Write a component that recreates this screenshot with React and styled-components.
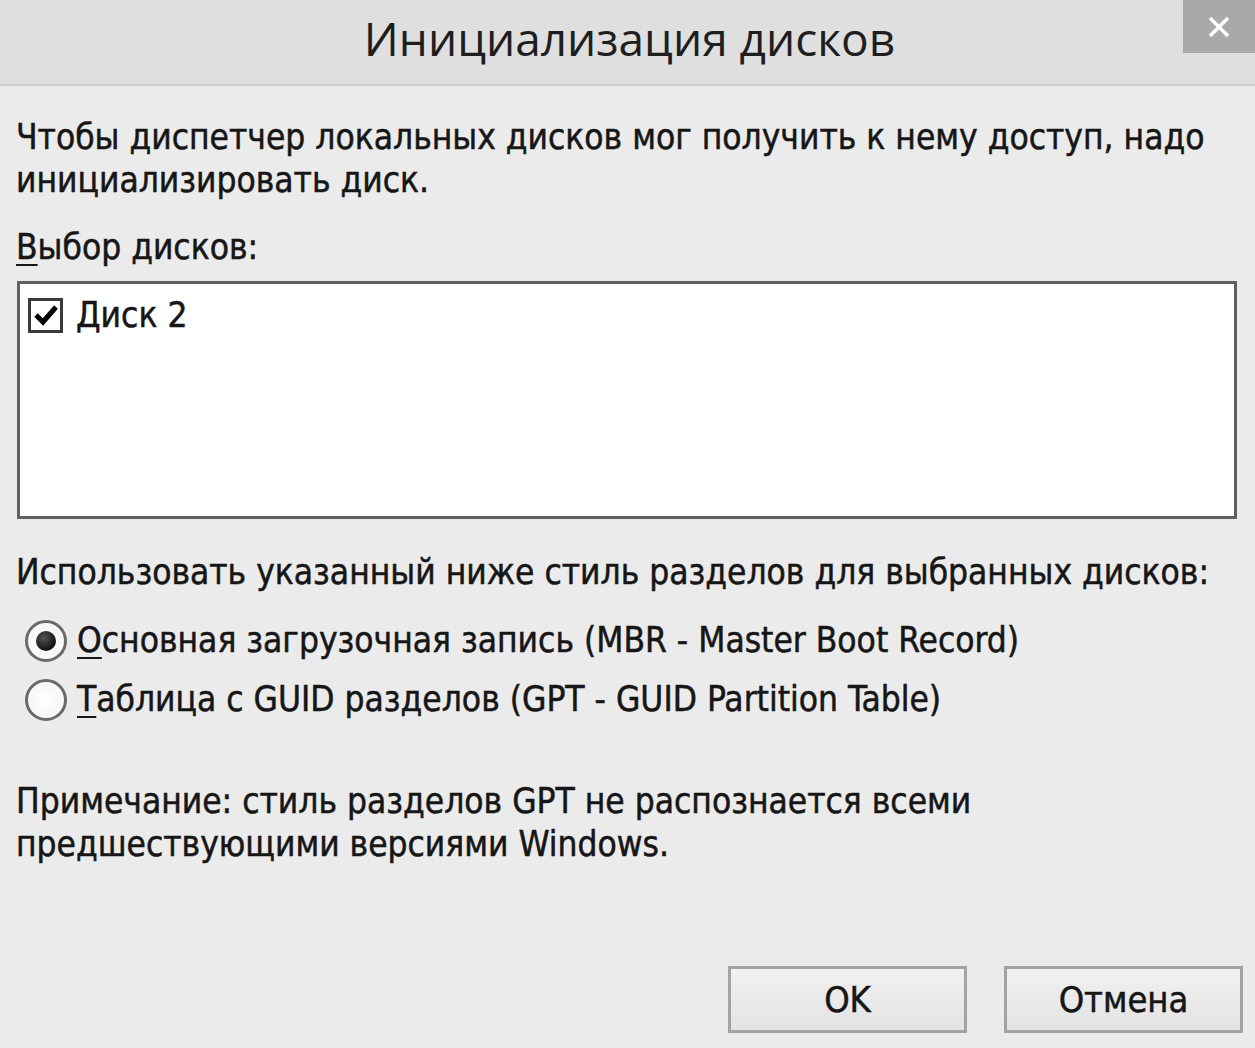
import styled, { createGlobalStyle } from "styled-components";

const Global = createGlobalStyle`
  html, body {
    margin: 0;
    padding: 0;
    background: #ebebeb;
  }
  body {
    font-family: "DejaVu Sans Condensed", "DejaVu Sans", "Liberation Sans", sans-serif;
    font-stretch: condensed;
  }
`;

const Window = styled.div`
  width: 1255px;
  height: 1048px;
  display: flex;
  flex-direction: column;
  background: #ebebeb;
  color: #161616;
  overflow: hidden;
`;

const TitleBar = styled.div`
  position: relative;
  height: 84px;
  flex: none;
  display: flex;
  align-items: center;
  justify-content: center;
  background: #dfdfdf;
  border-bottom: 2px solid #cfcfcf;
`;

const Title = styled.h1`
  margin: 0 0 8px 4px;
  font-family: "Open Sans", "Noto Sans", sans-serif;
  font-stretch: normal;
  font-weight: 400;
  font-size: 46px;
  color: #1e1e1e;
`;

const CloseButton = styled.div`
  position: absolute;
  top: 0;
  right: 0;
  width: 72px;
  height: 53px;
  background: #a9a9a9;
  display: flex;
  align-items: center;
  justify-content: center;
`;

const Body = styled.div`
  flex: 1;
  display: flex;
  flex-direction: column;
  padding: 0 18px 0 16px;
  font-size: 35px;
  line-height: 43px;
  -webkit-text-stroke: 0.5px #161616;
`;

const Text = styled.p`
  margin: ${(p) => p.$top}px 0 0;
`;

const Key = styled.span`
  text-decoration: underline;
  text-underline-offset: 5px;
  text-decoration-thickness: 2px;
`;

const ListBox = styled.div`
  margin: 12px 0 0 1px;
  width: 1220px;
  height: 238px;
  background: #fff;
  border: 3px solid #606060;
  padding: 13px 8px;
  box-sizing: border-box;
`;

const CheckRow = styled.label`
  display: flex;
  align-items: center;
  gap: 13px;
  height: 36px;
`;

const CheckBox = styled.span`
  width: 35px;
  height: 35px;
  box-sizing: border-box;
  border: 3px solid #3a3a3a;
  background: #fff;
  display: flex;
  align-items: center;
  justify-content: center;
  -webkit-text-stroke: 0;
`;

const Options = styled.div`
  margin-top: 17px;
  display: flex;
  flex-direction: column;
`;

const RadioRow = styled.label`
  display: flex;
  align-items: center;
  height: 59px;
  gap: 10px;
  padding-left: 9px;
`;

const Radio = styled.span`
  width: 42px;
  height: 42px;
  box-sizing: border-box;
  border-radius: 50%;
  border: 3px solid #6a6a6a;
  background: radial-gradient(circle, #ffffff 0%, #f2f2f2 100%);
  display: flex;
  align-items: center;
  justify-content: center;
  box-shadow: inset 0 0 0 2px #fafafa;
`;

const Dot = styled.span`
  width: 20px;
  height: 20px;
  border-radius: 50%;
  background: radial-gradient(circle at 40% 35%, #555 0%, #111 70%);
`;

const Footer = styled.div`
  margin-top: auto;
  margin-bottom: 15px;
  display: flex;
  justify-content: flex-end;
  gap: 37px;
  margin-right: -6px;
`;

const Button = styled.button`
  width: 239px;
  height: 67px;
  border: 3px solid #a3a3a3;
  background: linear-gradient(#f1f1f1, #e3e3e3);
  font-family: inherit;
  font-stretch: condensed;
  font-size: 36px;
  color: #161616;
  -webkit-text-stroke: 0.5px #161616;
  padding: 0;
`;

export default function App() {
  return (
    <Window>
      <Global />
      <TitleBar>
        <Title>Инициализация дисков</Title>
        <CloseButton>
          <svg width="22" height="22" viewBox="0 0 22 22">
            <path d="M2 2 L20 20 M20 2 L2 20" stroke="#fff" strokeWidth="3.5" />
          </svg>
        </CloseButton>
      </TitleBar>
      <Body>
        <Text $top={30}>
          Чтобы диспетчер локальных дисков мог получить к нему доступ, надо
          <br />
          инициализировать диск.
        </Text>
        <Text $top={24}>
          <Key>В</Key>ыбор дисков:
        </Text>
        <ListBox>
          <CheckRow>
            <CheckBox>
              <svg width="24" height="22" viewBox="0 0 24 22">
                <path d="M2 11 L9 18 L22 3" fill="none" stroke="#000" strokeWidth="5" />
              </svg>
            </CheckBox>
            Диск 2
          </CheckRow>
        </ListBox>
        <Text $top={32}>
          Использовать указанный ниже стиль разделов для выбранных дисков:
        </Text>
        <Options>
          <RadioRow>
            <Radio>
              <Dot />
            </Radio>
            <span>
              <Key>О</Key>сновная загрузочная запись (MBR - Master Boot Record)
            </span>
          </RadioRow>
          <RadioRow>
            <Radio />
            <span>
              <Key>Т</Key>аблица с GUID разделов (GPT - GUID Partition Table)
            </span>
          </RadioRow>
        </Options>
        <Text $top={51}>
          Примечание: стиль разделов GPT не распознается всеми
          <br />
          предшествующими версиями Windows.
        </Text>
        <Footer>
          <Button>OK</Button>
          <Button>Отмена</Button>
        </Footer>
      </Body>
    </Window>
  );
}
